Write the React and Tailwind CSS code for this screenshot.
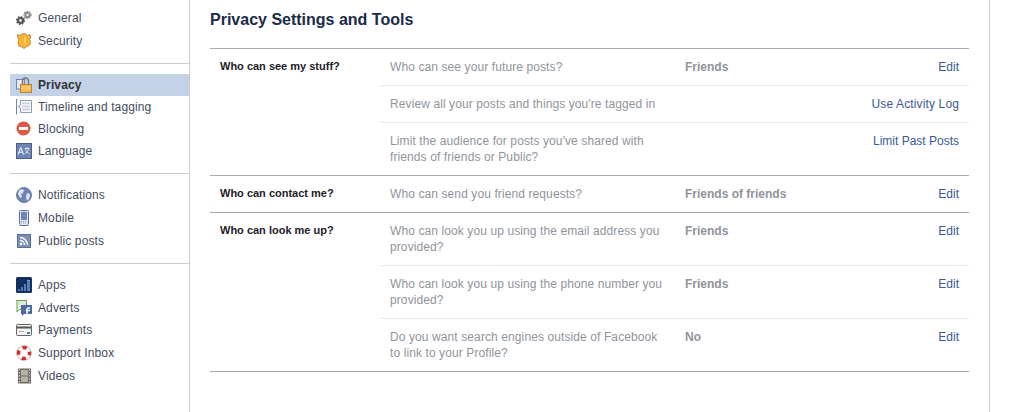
const GearsIcon = () => (
  <svg width="16" height="16" viewBox="0 0 16 16">
    <circle cx="4.5" cy="10.5" r="2.5" fill="none" stroke="#4f4f4f" strokeWidth="2.2" />
    <circle cx="4.5" cy="10.5" r="4" fill="none" stroke="#4f4f4f" strokeWidth="1.2" strokeDasharray="1.6 1.5" />
    <circle cx="11.5" cy="5" r="2.2" fill="none" stroke="#8a8a8a" strokeWidth="2" />
    <circle cx="11.5" cy="5" r="3.6" fill="none" stroke="#8a8a8a" strokeWidth="1.1" strokeDasharray="1.4 1.2" />
  </svg>
);

const BadgeIcon = () => (
  <svg width="16" height="16" viewBox="0 0 16 16">
    <path d="M1.5 1.500 4 2.500 6 .8h3.500L11.500 2.500 14 1.500l.7 2.500-.9 2.500.9 3-1.200 3-2.500.8L8 15.500l-2.500-1.700-2.500-.8-1.200-3 .9-3-.9-2.500z" fill="#f9b233" stroke="#a9823a" strokeWidth=".8" />
    <path d="M9.500 3.500 8.500 8l1.500 3.500" fill="none" stroke="#ffd78a" strokeWidth="1.200" />
  </svg>
);

const LockIcon = () => (
  <svg width="16" height="16" viewBox="0 0 16 16">
    <rect x=".5" y="2.500" width="8" height="9.500" fill="#e4ecf7" stroke="#6d84b4" />
    <path d="M6.500 8V4a3 3 0 0 1 6 0v4" fill="none" stroke="#777" strokeWidth="1.500" />
    <rect x="4.500" y="7.500" width="11" height="8" fill="#f7b64b" stroke="#b9852c" />
    <path d="M5 10h10M5 12h10" stroke="#fbd58c" />
  </svg>
);

const TimelineIcon = () => (
  <svg width="16" height="16" viewBox="0 0 16 16">
    <path d="M.5 0v15.500" stroke="#6d84b4" />
    <path d="M4.500 1.500h11v12h-11V9L2 7.500 4.500 6z" fill="#f3f5f9" stroke="#8d9db8" />
    <path d="M6 4.500h8M6 7.500h8M6 10.500h8" stroke="#c9ced8" strokeWidth="1.500" />
  </svg>
);

const BlockIcon = () => (
  <svg width="16" height="16" viewBox="0 0 16 16">
    <circle cx="7.500" cy="7.500" r="7" fill="#dc5a43" />
    <rect x="3" y="6" width="9" height="3" fill="#fff" />
  </svg>
);

const LanguageIcon = () => (
  <svg width="16" height="16" viewBox="0 0 16 16">
    <rect x=".5" y=".5" width="15" height="15" fill="#6d84b4" stroke="#47608f" />
    <path d="M2 11.500 4.800 4.500 7.500 11.500M3 9.200h3.500" fill="none" stroke="#fff" />
    <path d="M8.500 5.500h5M11 4v1.500M9.500 6c.5 2 2 4 4 5M12.500 6c-.5 2-2 4-4 5" fill="none" stroke="#dfe5f0" strokeWidth=".9" />
  </svg>
);

const GlobeIcon = () => (
  <svg width="16" height="16" viewBox="0 0 16 16">
    <circle cx="8" cy="8" r="7.500" fill="#6d84b4" />
    <path d="M5 2 8 3 7 6 5 7 6 10 4 11 2 7 3 3.500zM11 6l3 1-.5 4-2.500 3-1-4z" fill="#dfe5f0" />
    <circle cx="8" cy="8" r="7.500" fill="none" stroke="#4e6596" strokeWidth=".8" />
  </svg>
);

const MobileIcon = () => (
  <svg width="16" height="16" viewBox="0 0 16 16">
    <rect x="3.500" y=".5" width="9" height="15" rx="1" fill="#dfe5f0" stroke="#5a7099" />
    <rect x="5" y="2" width="6" height="8" fill="#6d84b4" />
    <path d="M5 11.500h6M5 13h6" stroke="#8d9db8" strokeDasharray="1 1" />
  </svg>
);

const RssIcon = () => (
  <svg width="16" height="16" viewBox="0 0 16 16">
    <rect x="1.500" y="1.500" width="13" height="13" fill="#7b8fba" stroke="#5a7099" />
    <circle cx="5" cy="11" r="1.300" fill="#fff" />
    <path d="M4 7.500A4.500 4.500 0 0 1 8.500 12M4 4.500A7.500 7.500 0 0 1 11.500 12" fill="none" stroke="#fff" strokeWidth="1.300" />
  </svg>
);

const AppsIcon = () => (
  <svg width="16" height="16" viewBox="0 0 16 16">
    <rect width="16" height="16" rx="1.500" fill="#14305c" />
    <path d="M2 14h2v-2H2zM5 14h2v-4H5zM8 14h2V7H8zM11 14h3V3h-3z" fill="#6ea4df" />
    <path d="M2 13h12M2 11h12M2 9h12M2 7h12M2 5h12" stroke="#14305c" strokeWidth=".6" />
  </svg>
);

const AdvertsIcon = () => (
  <svg width="16" height="16" viewBox="0 0 16 16">
    <path d="M.5.5h10v9h-7L1 12V.5z" fill="#dcebd2" stroke="#6aa04e" />
    <path d="M5 5h11v9H8l-2 2v-2H5z" fill="#4c69a6" />
    <path d="M11 14V9.500c0-1 .5-1.500 1.500-1.500H14M9.800 10.500H14" fill="none" stroke="#fff" strokeWidth="1.500" />
  </svg>
);

const CardIcon = () => (
  <svg width="16" height="16" viewBox="0 0 16 16">
    <rect x=".5" y="2.500" width="15" height="11" rx="1" fill="#f2f2f2" stroke="#666" />
    <rect x="1" y="4.500" width="14" height="2" fill="#555" />
    <path d="M3 9.500h5" stroke="#aaa" />
    <rect x="11" y="10" width="3" height="2" fill="#4b79c4" />
  </svg>
);

const LifebuoyIcon = () => (
  <svg width="16" height="16" viewBox="0 0 16 16">
    <circle cx="8" cy="8" r="5.500" fill="none" stroke="#f2f2f2" strokeWidth="3.500" />
    <circle cx="8" cy="8" r="5.500" fill="none" stroke="#d8272c" strokeWidth="3.500" strokeDasharray="4.300 4.340" strokeDashoffset="2.200" />
    <circle cx="8" cy="8" r="7.300" fill="none" stroke="#888" strokeWidth=".5" />
  </svg>
);

const FilmIcon = () => (
  <svg width="16" height="16" viewBox="0 0 16 16">
    <rect x="2" y=".5" width="13" height="15" fill="#6c6a64" />
    <rect x="5" y="2" width="7" height="5.500" fill="#b8b2a4" />
    <rect x="5" y="8.500" width="7" height="5.500" fill="#b8b2a4" />
    <path d="M3.500 1v14M13.500 1v14" stroke="#d5d2ca" strokeDasharray="1.500 1.500" />
  </svg>
);

const groups = [
  {
    box: "pt-[6px] pb-[11px]",
    row: "h-[23px]",
    items: [
      { label: "General", Icon: GearsIcon },
      { label: "Security", Icon: BadgeIcon },
    ],
  },
  {
    box: "border-t border-[#cccccc] pt-[10px] pb-[11px]",
    row: "h-[22px]",
    items: [
      { label: "Privacy", Icon: LockIcon, active: true },
      { label: "Timeline and tagging", Icon: TimelineIcon },
      { label: "Blocking", Icon: BlockIcon },
      { label: "Language", Icon: LanguageIcon },
    ],
  },
  {
    box: "border-t border-[#cccccc] pt-[9px] pb-[11px]",
    row: "h-[23px]",
    items: [
      { label: "Notifications", Icon: GlobeIcon },
      { label: "Mobile", Icon: MobileIcon },
      { label: "Public posts", Icon: RssIcon },
    ],
  },
  {
    box: "border-t border-[#cccccc] pt-[10px]",
    row: "h-[22.6px]",
    items: [
      { label: "Apps", Icon: AppsIcon },
      { label: "Adverts", Icon: AdvertsIcon },
      { label: "Payments", Icon: CardIcon },
      { label: "Support Inbox", Icon: LifebuoyIcon },
      { label: "Videos", Icon: FilmIcon },
    ],
  },
];

const sections = [
  {
    title: "Who can see my stuff?",
    rows: [
      { q: ["Who can see your future posts?"], value: "Friends", action: "Edit" },
      { q: ["Review all your posts and things you're tagged in"], action: "Use Activity Log", actionClass: "tracking-[0.13px]" },
      { q: ["Limit the audience for posts you've shared with", "friends of friends or Public?"], action: "Limit Past Posts" },
    ],
  },
  {
    title: "Who can contact me?",
    rows: [{ q: ["Who can send you friend requests?"], value: "Friends of friends", action: "Edit" }],
  },
  {
    title: "Who can look me up?",
    rows: [
      { q: ["Who can look you up using the email address you", "provided?"], value: "Friends", action: "Edit" },
      { q: ["Who can look you up using the phone number you", "provided?"], value: "Friends", action: "Edit" },
      { q: ["Do you want search engines outside of Facebook", "to link to your Profile?"], value: "No", action: "Edit" },
    ],
  },
];

export default function App() {
  return (
    <div className="flex h-[412px] w-[1023px] overflow-hidden bg-white font-['Liberation_Sans',Arial,sans-serif] text-[12px] leading-4">
      {/* sidebar */}
      <div className="w-[190px] shrink-0 border-r border-[#cccccc] pl-[10px]">
        {groups.map((group, i) => (
          <div key={i} className={group.box}>
            {group.items.map(({ label, Icon, active }) => (
              <div
                key={label}
                className={`flex items-center gap-[6px] pl-[6px] tracking-[0.12px] ${group.row} ${active ? "bg-[#c4d2e7] font-bold text-[#333333]" : "text-[#444c5f]"}`}
              >
                <Icon />
                <span>{label}</span>
              </div>
            ))}
          </div>
        ))}
      </div>

      {/* main */}
      <div className="w-[800px] shrink-0 border-r border-[#cccccc] px-[20px]">
        <h1 className="pt-[10px] text-[16px] leading-[20px] font-bold text-[#1c2b4a]">Privacy Settings and Tools</h1>
        <div className="mt-[18px] border-b border-[#aaaaaa]">
          {sections.map((section) => (
            <div key={section.title} className="flex border-t border-[#aaaaaa]">
              <div className="w-[170px] shrink-0 pl-[10px] pt-[10px] text-[11px] leading-[14px] font-bold text-[#1d2129]">
                {section.title}
              </div>
              <div className="flex-1">
                {section.rows.map((row, j) => (
                  <div key={j} className={`flex p-[10px] ${j > 0 ? "border-t border-[#e9e9e9]" : ""}`}>
                    <div className="w-[295px] shrink-0 tracking-[0.1px] text-[#90949c]">
                      {row.q.map((line) => (
                        <div key={line}>{line}</div>
                      ))}
                    </div>
                    <div className="flex-1 font-bold text-[#90949c]">{row.value}</div>
                    <div className={`text-[#3b5998] ${row.actionClass || ""}`}>{row.action}</div>
                  </div>
                ))}
              </div>
            </div>
          ))}
        </div>
      </div>
    </div>
  );
}
